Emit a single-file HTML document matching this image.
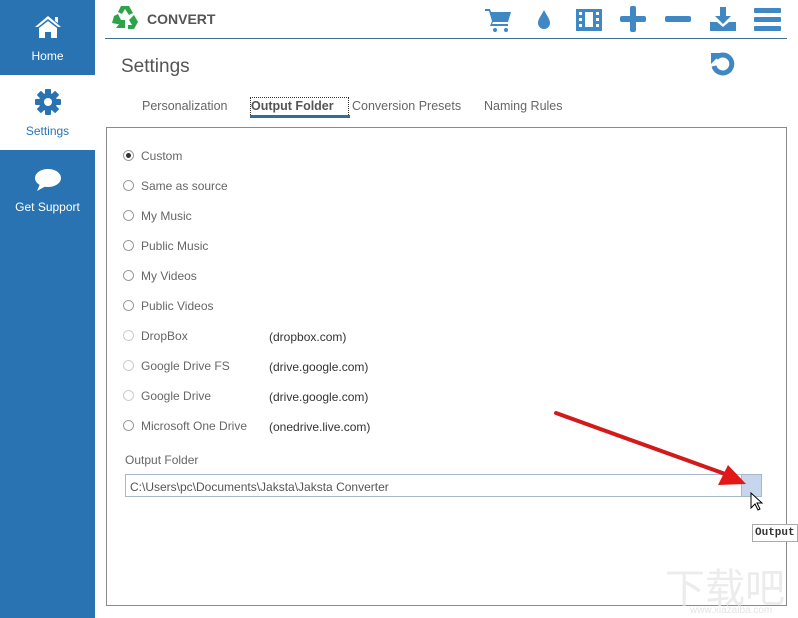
<!DOCTYPE html>
<html><head><meta charset="utf-8"><style>
*{margin:0;padding:0;box-sizing:border-box}
body{width:798px;height:618px;overflow:hidden;background:#fff;font-family:"Liberation Sans","DejaVu Sans",sans-serif;position:relative;color:#555}
.sb{position:absolute;left:0;top:0;width:95px;height:618px;background:#2a73b2}
.nav{position:absolute;left:0;width:95px;height:75px;text-align:center;color:#fff;font-size:12px}
.nav svg{position:absolute;left:34px;top:14px}
.nav span{position:absolute;left:0;right:0;top:49px}
.a{position:absolute}
.lbl{position:absolute;font-size:12px;color:#666;margin-top:1px}
.rad{position:absolute;width:11px;height:11px;border:1px solid #999;border-radius:50%;background:#fff}
.rad.dis{border-color:#ccc}
</style></head><body>
<div class="sb"></div>
<div class="nav" style="top:0"><svg width="28" height="26" viewBox="0 0 28 26"><path d="M14 2 L1 13 L4 13 L14 5 L24 13 L27 13Z M21 3h3v6l-3-2z" fill="#fff"/><path d="M5 14 L14 7 L23 14 V24 H17 V18 H11 V24 H5Z" fill="#fff"/></svg><span>Home</span></div>
<div class="nav" style="top:75px;background:#fff;color:#2a73b2"><svg width="28" height="28" viewBox="0 0 28 28" style="top:13px"><g fill="#2a73b2"><circle cx="14" cy="14" r="9"/><g><rect x="11" y="1" width="6" height="26" rx="1"/><rect x="11" y="1" width="6" height="26" rx="1" transform="rotate(45 14 14)"/><rect x="11" y="1" width="6" height="26" rx="1" transform="rotate(90 14 14)"/><rect x="11" y="1" width="6" height="26" rx="1" transform="rotate(135 14 14)"/></g></g><circle cx="14" cy="14" r="4" fill="#fff"/></svg><span style="top:49px">Settings</span></div>
<div class="nav" style="top:150px"><svg width="28" height="26" viewBox="0 0 28 26" style="top:17px"><ellipse cx="14" cy="11" rx="13" ry="9" fill="#fff"/><path d="M6 17 L3 24 L12 19Z" fill="#fff"/></svg><span style="top:50px">Get Support</span></div>

<svg class="a" style="left:111px;top:4px" width="28" height="26" viewBox="0 0 28 26"><g fill="#2ea44a"><path d="M10 2h8l4 7-4 2-4-6-3 5-4-2z"/><path d="M23 11l4 7-4 7h-6v-4h4l-3-5z"/><path d="M3 12l4-2 3 6h4v4H6l-5-1z"/><path d="M8 20h6v4H5z"/></g></svg>
<div class="a" style="left:147px;top:11px;font-size:14px;font-weight:bold;color:#555">CONVERT</div>
<div class="a" style="left:105px;top:38px;width:682px;height:1px;background:#3f6f96"></div>

<svg class="a" style="left:484px;top:5px" width="300" height="28" viewBox="0 0 300 28" fill="#3f88c4">
<path d="M1 4h5l1 3h20l-3 10H9l-1 2h16v2H6l2-5L5 6H1z"/><circle cx="11" cy="25" r="2"/><circle cx="22" cy="25" r="2"/>
<path d="M60 5c3 6 6 9 6 13a6 6 0 0 1-12 0c0-4 3-7 6-13z"/>
<path d="M92 4h26v22H92z M95 7v3h3V7z M95 13v3h3v-3z M95 19v3h3v-3z M112 7v3h3V7z M112 13v3h3v-3z M112 19v3h3v-3z M101 7v15h8V7z" fill-rule="evenodd"/>
<rect x="136" y="11" width="26" height="6" rx="2"/><rect x="146" y="1" width="6" height="26" rx="2"/>
<rect x="181" y="11" width="26" height="6" rx="2"/>
<path d="M236 2h6v9h5l-8 8-8-8h5z"/><path d="M226 17h7l6 5 6-5h7v9h-26z"/>
<rect x="270" y="3" width="27" height="5" rx="1"/><rect x="270" y="12" width="27" height="5" rx="1"/><rect x="270" y="21" width="27" height="5" rx="1"/>
</svg>
<svg class="a" style="left:708px;top:50px" width="30" height="30" viewBox="0 0 30 30"><path d="M8 8a9 9 0 1 1-2 8" fill="none" stroke="#3f88c4" stroke-width="5"/><path d="M3 3h11l-11 11z" fill="#3f88c4"/></svg>

<div class="a" style="left:121px;top:56px;font-size:19px;color:#555">Settings</div>
<div class="a" style="left:142px;top:99px;font-size:12.5px;color:#666">Personalization</div>
<div class="a" style="left:250px;top:97px;width:99px;height:18px;border:1px dotted #333;border-bottom:none"></div>
<div class="a" style="left:251px;top:99px;font-size:12.5px;font-weight:bold;color:#555">Output Folder</div>
<div class="a" style="left:250px;top:115px;width:100px;height:3px;background:#2f6f98"></div>
<div class="a" style="left:352px;top:99px;font-size:12.5px;color:#666">Conversion Presets</div>
<div class="a" style="left:484px;top:99px;font-size:12.5px;color:#666">Naming Rules</div>

<div class="a" style="left:106px;top:127px;width:681px;height:479px;border:1px solid #8a8a8a"></div>

<div class="rad" style="left:123px;top:150px"><div style="width:5px;height:5px;background:#333;border-radius:50%;margin:2px"></div></div>
<div class="lbl" style="left:141px;top:148px">Custom</div>
<div class="rad" style="left:123px;top:180px"></div><div class="lbl" style="left:141px;top:178px">Same as source</div>
<div class="rad" style="left:123px;top:210px"></div><div class="lbl" style="left:141px;top:208px">My Music</div>
<div class="rad" style="left:123px;top:240px"></div><div class="lbl" style="left:141px;top:238px">Public Music</div>
<div class="rad" style="left:123px;top:270px"></div><div class="lbl" style="left:141px;top:268px">My Videos</div>
<div class="rad" style="left:123px;top:300px"></div><div class="lbl" style="left:141px;top:298px">Public Videos</div>
<div class="rad dis" style="left:123px;top:330px"></div><div class="lbl" style="left:141px;top:328px">DropBox</div><div class="lbl" style="left:269px;top:329px;color:#333">(dropbox.com)</div>
<div class="rad dis" style="left:123px;top:360px"></div><div class="lbl" style="left:141px;top:358px">Google Drive FS</div><div class="lbl" style="left:269px;top:359px;color:#333">(drive.google.com)</div>
<div class="rad dis" style="left:123px;top:390px"></div><div class="lbl" style="left:141px;top:388px">Google Drive</div><div class="lbl" style="left:269px;top:389px;color:#333">(drive.google.com)</div>
<div class="rad" style="left:123px;top:420px"></div><div class="lbl" style="left:141px;top:418px">Microsoft One Drive</div><div class="lbl" style="left:269px;top:419px;color:#333">(onedrive.live.com)</div>
<div class="lbl" style="left:125px;top:452px">Output Folder</div>
<div class="a" style="left:125px;top:474px;width:637px;height:23px;border:1px solid #a8b8cc"></div>
<div class="a" style="left:741px;top:474px;width:21px;height:23px;background:#c7d6ec;border:1px solid #a8b8cc"></div>
<div class="lbl" style="left:130px;top:479px;color:#555">C:\Users\pc\Documents\Jaksta\Jaksta Converter</div>

<svg class="a" style="left:550px;top:405px" width="200" height="90"><line x1="6" y1="8" x2="178" y2="70" stroke="#d21a1a" stroke-width="4" stroke-linecap="round"/><path d="M196 79 L168 80 L178 60Z" fill="#e01818"/></svg>
<svg class="a" style="left:750px;top:492px" width="14" height="20"><path d="M1 1v15l4-4 3 6 2-1-3-6h5z" fill="#fff" stroke="#000"/></svg>
<div class="a" style="left:752px;top:524px;width:46px;height:18px;border:1px solid #aaa;background:#fff;font-family:'Liberation Mono',monospace;font-size:11px;font-weight:bold;color:#333;padding:2px 0 0 2px">Output</div>
<div class="a" style="left:665px;top:565px;font-size:40px;color:#ececec;font-family:'Noto Sans CJK SC',sans-serif;line-height:40px">下载吧</div>
<div class="a" style="left:690px;top:605px;font-size:10px;color:#e4e4e4">www.xiazaiba.com</div>
</body></html>
